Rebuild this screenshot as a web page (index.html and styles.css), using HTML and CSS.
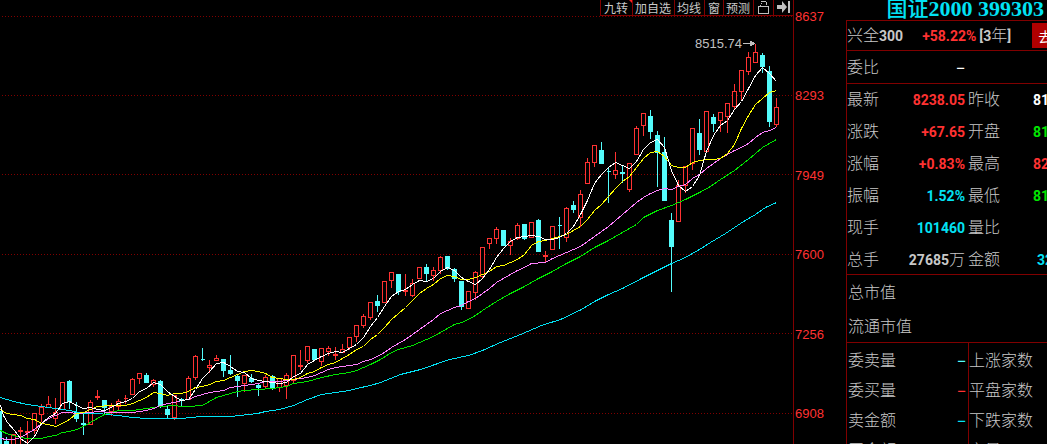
FILE: index.html
```html
<!DOCTYPE html>
<html lang="zh-CN">
<head>
<meta charset="utf-8">
<title>国证2000 399303</title>
<link rel="stylesheet" href="styles.css">
</head>
<body>
<main class="screen">
  <section class="chart">
    <svg class="plot" viewBox="0 0 793 444" preserveAspectRatio="xMaxYMin slice" role="img" aria-label="日K线">
      <g class="grid">
        <path d="M2 16.5H793M2 95.5H793M2 174.5H793M2 254.5H793M2 333.5H793M2 413.5H793"/>
      </g>
      <g id="candles"></g>
      <g id="averages"></g>
      <text class="peak" x="695" y="48">8515.74</text>
      <path class="peak-arrow" d="M743 43.5H755M750.5 41V46M751.5 41V46M752.5 42V45M753.5 42V45"/>
    </svg>
    <nav class="tools">
      <button class="tool tool-new">九转</button>
      <button class="tool">加自选</button>
      <button class="tool">均线</button>
      <button class="tool">窗</button>
      <button class="tool">预测</button>
      <button class="tool" aria-label="锁定">
        <svg class="icon" width="13" height="14" viewBox="0 0 13 14"><path class="line" d="M1.500 5.500H11.500V12.500H1.500ZM3.500 5V3.500M4 2.500H5M4 0.500H9M9.500 1V4"/></svg>
      </button>
      <button class="tool" aria-label="移到最后">
        <svg class="icon" width="13" height="14" viewBox="0 0 13 14"><path class="solid" d="M0 4H5V0L10 6L5 12V8H0ZM11 0H13V12H11Z"/></svg>
      </button>
    </nav>
  </section>

  <div class="axis">
    <span>8637</span><span>8293</span><span>7949</span><span>7600</span><span>7256</span><span>6908</span>
  </div>

  <aside class="side">
    <h1 class="title"><span class="title-name">国证</span>2000 399303</h1>
    <div class="panel">
      <div class="fund">
        <span>兴全<b>300</b></span>
        <span class="fund-rate"><b class="up">+58.22%</b><span class="fund-span"><b>[3</b>年<b>]</b></span></span>
        <button class="go">去</button>
      </div>
      <dl class="ratio pair"><dt>委比</dt><dd class="dash white">–</dd></dl>
      <div class="quotes">
        <dl class="pair"><dt>最新</dt><dd class="up"><b>8238.05</b></dd></dl>
        <dl class="pair"><dt>昨收</dt><dd class="white"><b>81</b></dd></dl>
        <dl class="pair"><dt>涨跌</dt><dd class="up"><b>+67.65</b></dd></dl>
        <dl class="pair"><dt>开盘</dt><dd class="down"><b>81</b></dd></dl>
        <dl class="pair"><dt>涨幅</dt><dd class="up"><b>+0.83%</b></dd></dl>
        <dl class="pair"><dt>最高</dt><dd class="up"><b>82</b></dd></dl>
        <dl class="pair"><dt>振幅</dt><dd class="cyan"><b>1.52%</b></dd></dl>
        <dl class="pair"><dt>最低</dt><dd class="down"><b>81</b></dd></dl>
        <dl class="pair"><dt>现手</dt><dd class="cyan"><b>101460</b></dd></dl>
        <dl class="pair"><dt>量比</dt><dd></dd></dl>
        <dl class="pair"><dt>总手</dt><dd><b>27685</b>万</dd></dl>
        <dl class="pair"><dt>金额</dt><dd class="cyan amount"><b>32</b></dd></dl>
      </div>
      <div class="caps">
        <span>总市值</span>
        <span>流通市值</span>
      </div>
      <div class="orders">
        <div class="orders-left">
          <dl class="pair"><dt>委卖量</dt><dd class="dash aqua">–</dd></dl>
          <dl class="pair"><dt>委买量</dt><dd class="dash up">–</dd></dl>
          <dl class="pair"><dt>卖金额</dt><dd class="dash cyan">–</dd></dl>
          <dl class="pair"><dt>买金额</dt><dd></dd></dl>
        </div>
        <div class="orders-right">
          <span>上涨家数</span>
          <span>平盘家数</span>
          <span>下跌家数</span>
          <span>市量</span>
        </div>
      </div>
    </div>
  </aside>
</main>
<script src="chart.js"></script>
</body>
</html>
```

FILE: styles.css
```css
* { box-sizing: border-box; }

body {
  margin: 0;
  background: #000;
  color: #c8c8c8;
  font: 300 16px/28px "Noto Sans CJK SC", sans-serif;
}

b { font: bold 14px Roboto, sans-serif; }
dl, dd, h1 { margin: 0; }
button { font: inherit; color: inherit; cursor: pointer; }

.screen {
  display: grid;
  grid-template-columns: minmax(0, 1fr) 52px 201px;
  height: 100vh;
  overflow: hidden;
}

.chart { position: relative; min-height: 0; border-right: 1px solid #800000; }
.plot { display: block; width: 100%; height: 100%; }
.grid path { fill: none; stroke: #800000; stroke-dasharray: 1 2; shape-rendering: crispEdges; }
.candle-up { fill: #000; stroke: #ff3232; shape-rendering: crispEdges; }
.candle-down { fill: #54fcfc; stroke: #54fcfc; shape-rendering: crispEdges; }
.average { fill: none; shape-rendering: crispEdges; }
.ma5 { stroke: #fff; }
.ma10 { stroke: #ff0; }
.ma20 { stroke: #ff80ff; }
.ma30 { stroke: #00e600; }
.ma60 { stroke: #02e2f4; }
.peak { fill: #c0c0c0; font: 13px "Liberation Sans", sans-serif; }
.peak-arrow { fill: none; stroke: #c0c0c0; shape-rendering: crispEdges; }

.tools {
  position: absolute;
  top: 0;
  right: 0;
  display: flex;
  height: 16px;
  background: #000;
  border-bottom: 1px solid #800000;
}
.tool {
  position: relative;
  padding: 0 3px;
  height: 15px;
  border: 0;
  border-left: 1px solid #800000;
  background: none;
  font-size: 12px;
  font-weight: 400;
  line-height: 12px;
  white-space: nowrap;
}
.tool:nth-child(-n+3), .tool:nth-child(5) { padding: 0 3px 0 2px; }
.tool-new { width: 32px; }
.tool-new::after {
  content: "";
  position: absolute;
  top: 0;
  right: 0;
  border-top: 3px solid #ff2020;
  border-left: 3px solid transparent;
}
.icon { display: block; }
.icon .line { fill: none; stroke: #c0c0c0; shape-rendering: crispEdges; }
.icon .solid { fill: #c0c0c0; }

.axis {
  display: flex;
  flex-direction: column;
  justify-content: space-between;
  padding: 9px 0 22px 1px;
  color: #ff3232;
  font: 13px/16px "Liberation Sans", sans-serif;
}

.side { min-width: 0; overflow: hidden; }
.title {
  height: 20px;
  padding-right: 3px;
  color: #02e2f4;
  font: bold 22px/18px "Liberation Serif", serif;
  text-align: right;
  white-space: nowrap;
}
.title-name { font: 500 21px/12px "Noto Sans CJK SC", sans-serif; }

.panel { border-top: 1px solid #800000; border-left: 1px solid #800000; }
.fund { display: flex; height: 29px; line-height: 26px; white-space: nowrap; }
.fund-rate { margin-left: 19px; }
.fund-span { margin-left: 3px; }
.go {
  flex: 1;
  height: 25px;
  margin: 2px 0 0 21px;
  padding: 0 0 0 6px;
  border: 0;
  background: #b00000;
  color: #fff;
  font-size: 14px;
  font-weight: 400;
  line-height: 22px;
  text-align: left;
}

.pair { display: flex; justify-content: space-between; white-space: nowrap; }
.dash { font-weight: 500; }
.ratio {
  height: 33px;
  padding-right: 82px;
  border-top: 1px solid #800000;
  line-height: 30px;
}

.quotes {
  display: grid;
  grid-template-columns: 118px 1fr;
  gap: 4px 3px;
  padding-bottom: 2px;
  border-top: 1px solid #800000;
}
.quotes .pair:nth-child(even) { justify-content: flex-start; gap: 33px; }
.quotes .pair:nth-child(even) .amount { padding-left: 4px; }

.caps {
  display: grid;
  gap: 1px;
  padding-left: 1px;
  border-top: 1px solid #800000;
  line-height: 33px;
}
.orders {
  display: grid;
  grid-template-columns: 121px 1fr;
  border-top: 1px solid #800000;
  line-height: 30px;
}
.orders-left { padding: 1px 2px 0 1px; }
.orders-right { display: grid; padding-top: 1px; border-left: 1px solid #800000; white-space: nowrap; }

.white { color: #fff; }
.up { color: #ff3232; }
.down { color: #00e600; }
.cyan { color: #02e2f4; }
.aqua { color: #54fcfc; }
```

FILE: chart.js
```js
// Candles from left to right, one per trading day: direction, high, body top, body bottom, low.
const STEP = 7;
const FIRST_X = -1;
const candles = `
d 411 411 446 446|d 437 441 446 446|u 434 434 446 446|u 427 430 431 444|u 421 431 432 444|u 413 413 430 434
u 404 407 414 422|u 396 404 407 408|u 398 412 418 424|u 382 382 409 409|d 380 381 401 409|d 402 412 418 422
d 413 423 424 435|u 400 402 424 424|u 390 396 397 400|d 400 400 407 415|u 403 406 411 416|u 399 401 406 410
u 395 398 398 404|u 378 379 394 394|u 373 373 378 384|d 373 375 382 382|u 379 380 384 387|d 380 381 405 408
d 405 409 414 418|u 395 395 417 420|d 398 399 400 407|u 376 378 399 399|u 355 356 377 380|d 348 359 359 361
u 360 365 367 373|u 355 358 360 360|d 359 359 370 377|d 355 370 373 375|d 374 376 380 397|u 375 375 383 392
d 374 378 381 383|d 383 385 387 396|u 375 377 386 388|d 375 376 388 390|u 378 378 387 392|u 373 375 385 399
u 355 355 380 383|u 350 365 366 370|u 346 346 360 363|d 349 349 359 360|u 348 348 361 366|u 346 348 351 356
u 347 354 355 360|u 344 349 352 352|u 337 337 347 350|u 325 325 336 342|u 314 316 325 328|u 302 302 317 320
d 295 301 305 312|u 281 281 302 302|u 272 272 280 288|d 274 274 291 295|u 274 290 291 296|u 279 283 295 297
u 267 267 278 278|d 264 267 273 281|u 267 270 275 281|u 256 257 270 274|d 256 256 268 270|d 268 269 278 282
d 281 281 306 310|u 291 291 308 308|u 271 272 292 300|u 247 247 276 279|u 238 238 243 249|u 227 229 238 244
d 230 230 245 246|u 238 241 245 255|u 223 225 238 240|d 224 224 238 240|u 222 222 237 237|d 219 220 251 252
u 251 255 256 263|u 226 226 249 249|d 217 225 225 249|u 207 208 237 242|d 201 205 209 213|u 190 194 217 227
u 158 162 183 183|u 145 145 162 167|d 142 150 163 164|d 167 171 171 203|u 152 170 174 179|d 165 172 173 183
u 163 163 189 192|u 126 128 154 154|u 113 113 125 136|d 110 116 131 139|d 131 135 152 187|d 137 152 200 201
d 213 220 246 292|u 180 185 221 221|u 166 166 185 193|u 128 128 163 170|d 119 133 149 155|u 111 111 151 151
d 114 117 123 132|u 112 112 120 132|u 103 103 116 133|u 84 91 106 110|u 70 70 91 101|u 52 57 71 75
u 44 52 62 62|d 53 55 66 73|d 66 71 121 127|u 98 107 124 127`;

document.getElementById("candles").innerHTML = candles.trim().split(/[|\n]/).map((row, i) => {
  const [dir, ...levels] = row.split(" ");
  const [high, top, bottom, low] = levels.map(Number);
  const x = FIRST_X + i * STEP;
  return `<path class="candle-${dir === "u" ? "up" : "down"}" d="M${x + 0.5} ${high}V${top}M${x + 0.5} ${bottom + 1}V${low}M${x - 1.5} ${top + 0.5}H${x + 2.5}V${bottom + 0.5}H${x - 1.5}Z"/>`;
}).join("");

// Moving averages as x,y points.
const averages = {
  ma60: "0,397 13,401 27,404 41,406 55,408 69,410 83,413 97,413 118,415 132,417 146,418 181,418 200,416 230,416 257,413 265,411 279,409 293,405 307,399 321,394 335,392 349,390 356,388 370,385 380,382 400,374 420,369 449,359 468,355 482,350 500,342 520,334 541,325 560,319 581,309 594,301 608,294 622,288 643,277 657,270 671,263 685,257 699,249 710,242 725,233 740,223 755,214 765,207 776,202",
  ma30: "0,430 6,433 13,435 20,437 27,438 41,438 48,436 55,435 62,432 69,431 76,429 83,426 90,422 97,418 104,414 111,412 118,410 132,410 139,409 153,407 160,406 174,405 181,406 188,406 202,405 209,401 216,397 223,395 230,393 237,391 244,390 258,389 272,388 286,386 293,383 307,381 321,377 335,374 349,372 356,370 363,367 370,364 380,359 391,352 398,349 412,345 419,342 426,339 433,336 440,332 447,328 454,324 461,322 468,319 475,315 482,310 496,301 510,293 524,286 538,278 552,271 566,263 580,256 594,247 608,240 622,232 636,224 643,217 657,210 671,205 685,199 699,192 710,186 720,179 734,170 748,159 755,153 762,147 769,143 776,139",
  ma20: "0,438 6,439 13,439 20,437 27,433 34,429 41,423 48,418 55,415 62,412 69,412 76,413 90,412 97,411 111,412 132,412 139,411 146,410 153,408 160,405 167,403 174,402 181,400 188,399 195,396 202,394 209,392 216,391 223,390 230,387 237,386 244,385 251,384 258,383 265,381 279,381 293,379 307,377 314,375 321,372 328,369 335,367 349,365 356,364 363,361 370,359 377,356 384,352 391,347 398,343 405,339 412,334 419,329 426,324 433,319 440,313 447,310 454,307 461,305 468,301 475,298 482,293 489,288 496,282 503,278 510,274 517,270 524,267 531,263 545,262 552,258 559,255 566,252 573,249 580,246 587,241 594,236 601,231 608,226 615,220 622,214 629,208 636,202 643,197 650,193 657,190 664,188 671,189 678,186 685,184 692,178 699,174 706,168 713,163 720,158 727,154 734,150 741,147 748,143 755,137 762,132 769,130 776,127",
  ma10: "0,409 6,413 20,415 27,418 34,419 41,423 48,424 55,426 62,423 69,419 76,413 83,412 90,409 97,406 111,405 125,405 132,403 139,400 146,397 153,392 160,393 167,395 174,393 181,393 188,391 195,387 202,386 209,384 216,381 223,380 230,377 237,374 244,371 251,370 258,371 265,373 272,377 279,378 286,379 293,379 300,377 307,373 314,371 321,367 328,364 335,362 342,358 349,354 356,349 363,346 370,339 377,334 384,327 391,319 398,313 405,307 412,300 419,293 426,288 433,284 440,278 447,275 454,276 461,279 468,279 475,277 482,274 489,271 496,266 503,265 510,262 517,259 524,254 531,245 538,241 545,240 552,238 559,236 566,234 573,230 580,226 587,219 594,210 601,204 608,196 615,188 622,181 629,176 636,167 643,158 650,152 657,151 664,156 671,165 678,167 685,167 692,162 699,160 706,159 713,159 720,158 727,153 734,144 741,128 748,115 755,104 762,98 769,92 776,90",
  ma5: "0,405 3,415 7,422 14,430 20,438 27,443 34,436 41,423 48,417 55,413 62,403 69,401 76,405 83,408 90,407 97,409 104,410 111,407 118,403 125,401 132,398 139,391 146,388 153,382 160,384 167,391 174,396 181,400 188,399 195,389 202,378 209,371 216,363 223,362 230,366 237,371 244,372 251,378 258,380 265,381 272,382 279,383 286,382 293,376 300,373 307,364 314,360 321,356 328,353 335,351 342,352 349,348 356,344 363,337 370,326 377,317 384,306 391,296 398,291 405,289 412,284 419,280 426,281 433,278 440,271 447,267 454,270 461,277 468,281 475,284 482,278 489,269 496,257 503,248 510,241 517,237 524,236 531,235 538,236 545,239 552,239 559,237 566,233 573,226 580,214 587,200 594,183 601,174 608,167 615,162 622,165 629,168 636,161 643,149 650,142 657,139 664,147 671,170 678,185 685,191 692,186 699,175 706,151 713,135 720,125 727,120 734,109 741,101 748,88 755,75 762,67 769,73 776,81"
};

document.getElementById("averages").innerHTML = Object.entries(averages)
  .map(([name, points]) => `<polyline class="average ${name}" transform="translate(0.5 0.5)" points="${points}"/>`)
  .join("");
```
